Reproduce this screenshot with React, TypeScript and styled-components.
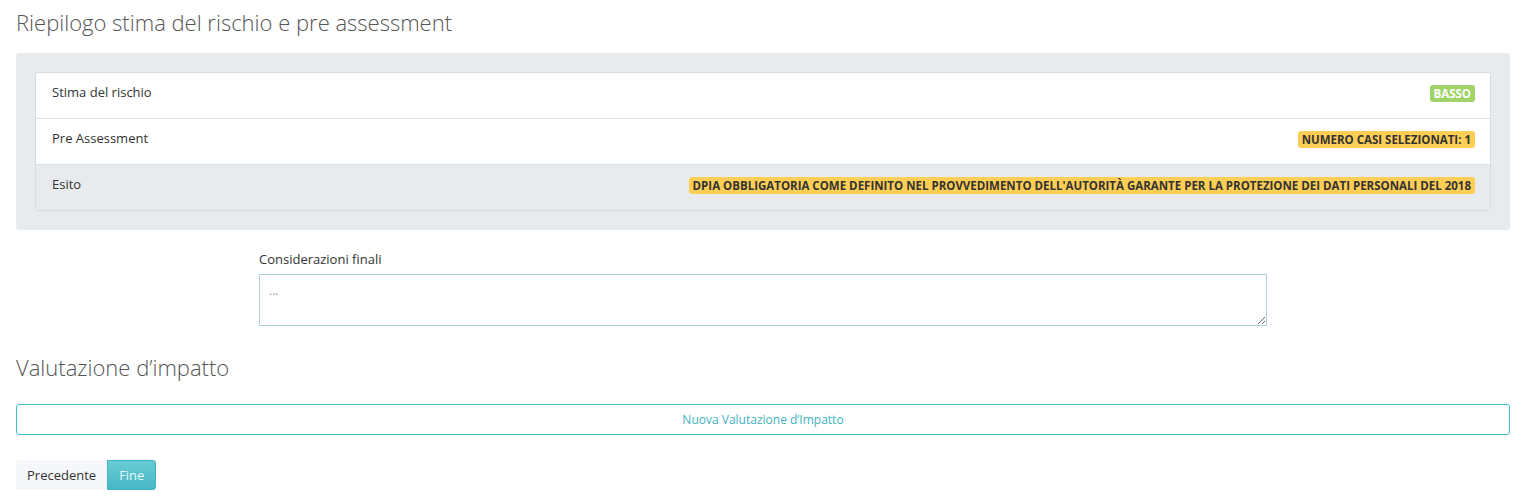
import React from "react";
import styled, { createGlobalStyle } from "styled-components";

const Global = createGlobalStyle`
  body { margin: 0; background: #fff; font-family: "Open Sans", sans-serif; color: #333; }
`;
const Page = styled.div`padding: 0 12px 0 16px;`;
const Title = styled.h3`
  margin: 0; padding-top: 7px; height: 53px; box-sizing: border-box;
  font-size: 22px; font-weight: 300; color: #555;
`;
const Panel = styled.div`
  background: #e8ebee; border-radius: 3px; padding: 19px 19px 19px 19px;
`;
const List = styled.div`
  border: 1px solid #d8dbde; border-radius: 3px; overflow: hidden; background: #fff;
`;
const Row = styled.div<{ $grey?: boolean }>`
  display: flex; justify-content: space-between; align-items: flex-start;
  height: 45px; box-sizing: border-box; padding: 10px 15px 0 16px;
  font-size: 13px; color: #333;
  background: ${(p) => (p.$grey ? "#e8ebee" : "#fff")};
  & + & { border-top: 1px solid #dcdfe2; height: 46px; }
`;
const Badge = styled.span<{ $c: string; $t: string }>`
  background: ${(p) => p.$c}; color: ${(p) => p.$t}; font-weight: 700; font-size: 11.5px;
  padding: 1px 4px; border-radius: 3px; line-height: 15px; margin-top: 2px;
`;
const Field = styled.div`width: 1008px; margin: 20px auto 0; padding-left: 0;`;
const Label = styled.div`font-size: 13px; color: #333; margin-bottom: 6px; line-height: 18px;`;
const Area = styled.textarea`
  display: block; width: 100%; height: 52px; box-sizing: border-box; border: 1px solid #aad4d8;
  font-family: "Open Sans", sans-serif; font-size: 12px; padding: 7px 9px; color: #999; resize: vertical;
`;
const H2 = styled.h3`margin: 26px 0 0; font-size: 22px; font-weight: 300; color: #555; line-height: 30px;`;
const Wide = styled.button`
  display: block; width: 100%; margin-top: 22px; height: 31px; background: #fff;
  border: 1px solid #3fbfcb; border-radius: 3px; color: #3fb2bf; font-family: "Open Sans", sans-serif; font-size: 12px;
`;
const Nav = styled.div`display: flex; margin-top: 25px;`;
const Btn = styled.button<{ $primary?: boolean }>`
  height: 30px; padding: 0 11px; border: none; font-family: "Open Sans", sans-serif; font-size: 13px;
  background: ${(p) => (p.$primary ? "linear-gradient(#67cbd2,#46b8c6)" : "#f5f7fa")};
  color: ${(p) => (p.$primary ? "#e8f8fa" : "#333")};
  border-radius: ${(p) => (p.$primary ? "0 3px 3px 0" : "3px 0 0 3px")};
  ${(p) => p.$primary && "border: 1px solid #3fb2bf;"}
`;

export default function App() {
  return (
    <Page>
      <Global />
      <Title>Riepilogo stima del rischio e pre assessment</Title>
      <Panel>
        <List>
          <Row><span>Stima del rischio</span><Badge $c="#a0d468" $t="#fff">BASSO</Badge></Row>
          <Row><span>Pre Assessment</span><Badge $c="#ffce54" $t="#333">NUMERO CASI SELEZIONATI: 1</Badge></Row>
          <Row $grey><span>Esito</span><Badge $c="#ffce54" $t="#333">DPIA OBBLIGATORIA COME DEFINITO NEL PROVVEDIMENTO DELL'AUTORITÀ GARANTE PER LA PROTEZIONE DEI DATI PERSONALI DEL 2018</Badge></Row>
        </List>
      </Panel>
      <Field>
        <Label>Considerazioni finali</Label>
        <Area defaultValue="..." />
      </Field>
      <H2>Valutazione d’impatto</H2>
      <Wide>Nuova Valutazione d’Impatto</Wide>
      <Nav><Btn>Precedente</Btn><Btn $primary>Fine</Btn></Nav>
    </Page>
  );
}
